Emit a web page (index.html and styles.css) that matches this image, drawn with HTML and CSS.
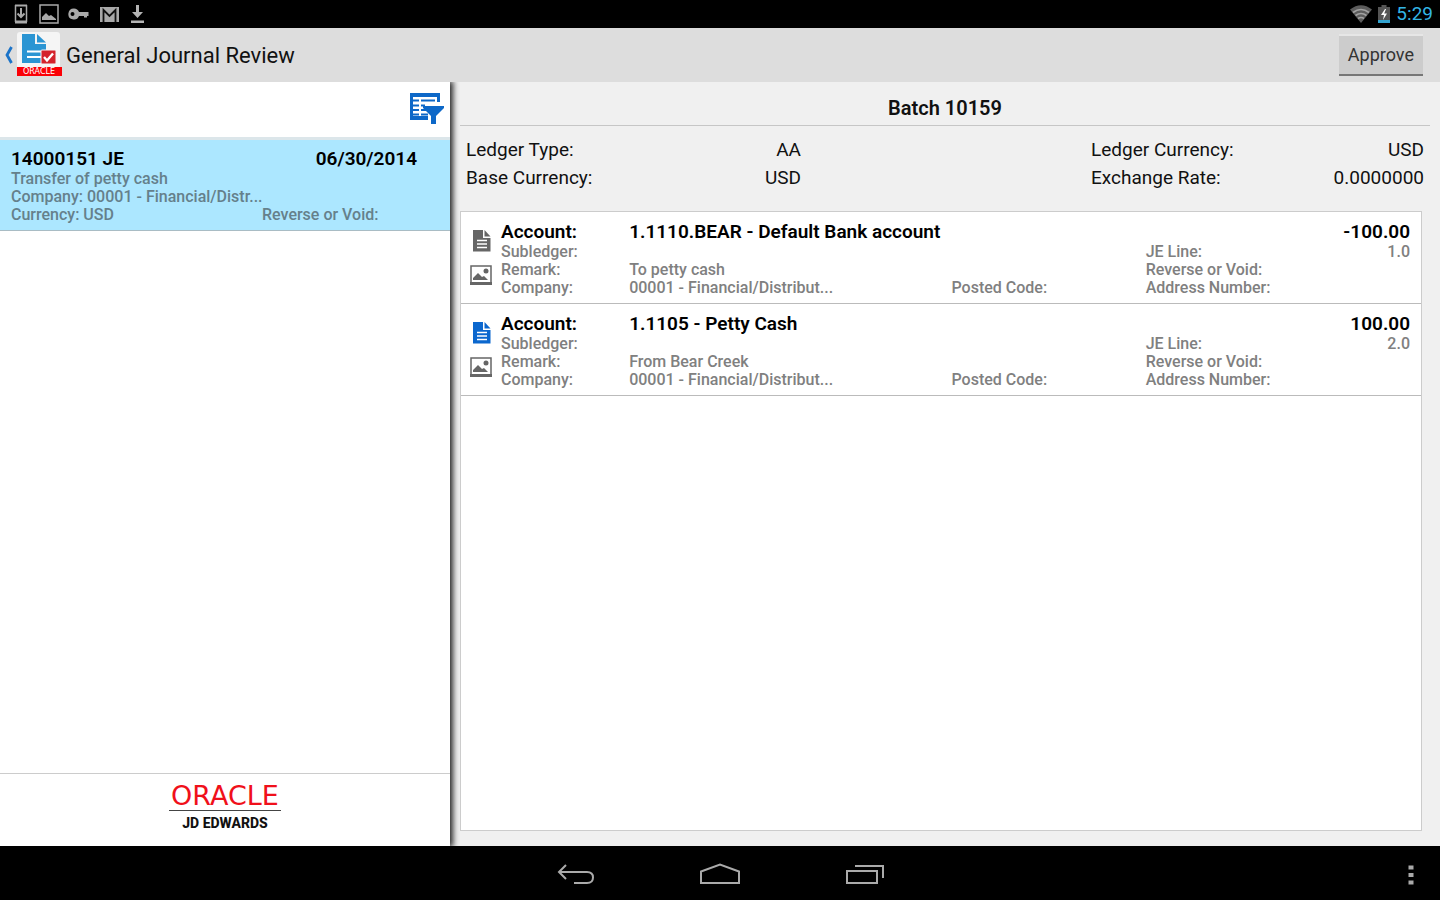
FILE: index.html
```html
<!DOCTYPE html>
<html lang="en">
<head>
<meta charset="utf-8">
<meta name="viewport" content="width=device-width, initial-scale=1">
<title>General Journal Review</title>
<link rel="stylesheet" href="styles.css">
</head>
<body>
<div class="statusbar">
  <div class="status-icons">
    <svg width="14" height="20" viewBox="0 0 14 20" fill="none" stroke="#a9a9a9"><path d="M1.5 1v17M12.500 1v17" stroke-width="1.500"/><path d="M1 1.500h12" stroke-width="2"/><path d="M1 18h12" stroke-width="3"/><path d="M7 4v9M3.500 9.500 7 13l3.500-3.500" stroke-width="2"/></svg>
    <svg width="20" height="20" viewBox="0 0 20 20"><path d="M1 1h18v18H1z" fill="none" stroke="#a9a9a9" stroke-width="1.500"/><path d="M3 16v-3l4-4 3 3 2-1 5 4v1z" fill="#a9a9a9"/></svg>
    <svg width="21" height="20" viewBox="0 0 21 20" fill="#a9a9a9"><path fill-rule="evenodd" d="M6 4.500a5.500 5.500 0 0 1 5 3.500h9.500v4H19v1.500h-3V12h-5A5.500 5.500 0 1 1 6 4.500zM4.500 8a2 2 0 1 0 0 4 2 2 0 0 0 0-4z"/></svg>
    <svg width="19" height="20" viewBox="0 0 19 20"><path d="M0 3h19v15H0z" fill="#a9a9a9"/><path d="M3.500 18V6l6 6 6-6v12" fill="none" stroke="#111" stroke-width="1.800"/></svg>
    <svg width="15" height="20" viewBox="0 0 15 20" fill="#b4b4b4"><path d="M6 1h3v7h4l-5.500 6L2 8h4zM1 16.500h13V19H1z"/></svg>
  </div>
  <div class="status-right">
    <svg width="22" height="18" viewBox="0 0 22 18"><path d="M0 4.500Q11-4 22 4.500L11 18z" fill="#5c5c5c"/><path d="M3 7.500q8-6 16 0M5.500 10.500q5.500-4 11 0M8 13.500q3-2 6 0" fill="none" stroke="#a2a2a2" stroke-width="1.600"/></svg>
    <svg width="12" height="18" viewBox="0 0 12 18"><path d="M3.500 0h5v2H12v16H0V2h3.500z" fill="#555"/><path d="M0 15h12v3H0z" fill="#33a3cf"/><path d="M7 4 3 10h3l-1 5 4-6.500H6.200L8 4z" fill="#fff"/></svg>
    <time>5:29</time>
  </div>
</div>
<header class="appbar">
  <button class="back" aria-label="Up"><svg width="9" height="18" viewBox="0 0 9 18"><path d="M7.500 1 3 9l4.500 8" fill="none" stroke="#1b73c8" stroke-width="2.800"/></svg></button>
  <svg class="applogo" width="46" height="46" viewBox="0 0 46 46" aria-label="Oracle">
    <rect x="1" y="0" width="43" height="40" rx="3" fill="#f5f5f5"/>
    <path d="M6 2h13v10h11v19H6z" fill="#2b95d3"/><path d="M21 2v8.500h9z" fill="#2b95d3"/>
    <path d="M11 19.500h14M11 25h14" stroke="#fff" stroke-width="2"/>
    <rect x="25" y="18" width="15" height="14" rx="1" fill="#d4232c" stroke="#f5f5f5"/>
    <path d="M28 25l3 3.500 6-7" fill="none" stroke="#fff" stroke-width="2.400"/>
    <path d="M1 35h45v9H1z" fill="#fb0006"/>
    <text class="applogo-text" x="23" y="42" text-anchor="middle">ORACLE</text>
  </svg>
  <h1>General Journal Review</h1>
  <button class="approve">Approve</button>
</header>
<main class="panes">
  <section class="master">
    <div class="toolbar">
      <button class="filter" aria-label="Filter"><svg width="36" height="34" viewBox="0 0 36 34" fill="#0d68c8">
        <path d="M1 1h30v9h-3V5H4v19h15v4H1z"/><path d="M4 7.500h6v2H4zM12 7.500h14v2H12zM4 12.500h6v2H4zM12 12.500h4v2h-4zM4 17h6v2H4zM12 17h6v2h-6zM4 21.500h6v2H4zM12 21.500h7v2h-7z"/><path d="M14 14h21v2l-8 8v8h-5v-8l-8-8z"/></svg></button>
    </div>
    <a class="entry" href="#entry">
      <span class="entry-head"><strong>14000151 JE</strong><strong>06/30/2014</strong></span>
      <span>Transfer of petty cash</span>
      <span>Company: 00001 - Financial/Distr...</span>
      <span class="entry-foot"><span>Currency: USD</span><span>Reverse or Void:</span></span>
    </a>
    <footer class="brand">
      <div class="brand-name">ORACLE</div>
      <div class="brand-product">JD EDWARDS</div>
    </footer>
  </section>
  <section class="detail">
    <h2>Batch 10159</h2>
    <dl class="summary">
      <div><dt>Ledger Type:</dt><dd>AA</dd></div>
      <div><dt>Ledger Currency:</dt><dd>USD</dd></div>
      <div><dt>Base Currency:</dt><dd>USD</dd></div>
      <div><dt>Exchange Rate:</dt><dd>0.0000000</dd></div>
    </dl>
    <div class="lines">
      <article class="line">
        <div class="line-icons">
          <button aria-label="Text attachment"><svg width="18" height="22" viewBox="0 0 18 22"><path d="M0 0h10v8h7.500v13.500H0z" fill="#666"/><path d="M11.500 0 17.500 6.500h-6z" fill="#666"/><path d="M4 10.500h10M4 14h10M4 17.500h10" stroke="#fff" stroke-width="1.500"/></svg></button>
          <button aria-label="Photo attachment"><svg width="22" height="20" viewBox="0 0 22 20"><path d="M1 1h20v17H1z" fill="#fff" stroke="#666" stroke-width="1.500"/><path d="M0 17h22v3H0zM3 15v-2l5-5 4 4 2-1 4 4z" fill="#666"/><circle cx="16" cy="6" r="2.500" fill="#666"/></svg></button>
        </div>
        <div class="fields">
          <strong>Account:</strong><strong class="account">1.1110.BEAR - Default Bank account</strong><strong class="amount">-100.00</strong>
          <span>Subledger:</span><span></span><span></span><span>JE Line:</span><span class="amount">1.0</span>
          <span>Remark:</span><span>To petty cash</span><span></span><span>Reverse or Void:</span><span></span>
          <span>Company:</span><span>00001 - Financial/Distribut...</span><span>Posted Code:</span><span>Address Number:</span><span></span>
        </div>
      </article>
      <article class="line">
        <div class="line-icons">
          <button aria-label="Text attachment"><svg width="18" height="22" viewBox="0 0 18 22"><path d="M0 0h10v8h7.500v13.500H0z" fill="#0b67ce"/><path d="M11.500 0 17.500 6.500h-6z" fill="#0b67ce"/><path d="M4 10.500h10M4 14h10M4 17.500h10" stroke="#fff" stroke-width="1.500"/></svg></button>
          <button aria-label="Photo attachment"><svg width="22" height="20" viewBox="0 0 22 20"><path d="M1 1h20v17H1z" fill="#fff" stroke="#666" stroke-width="1.500"/><path d="M0 17h22v3H0zM3 15v-2l5-5 4 4 2-1 4 4z" fill="#666"/><circle cx="16" cy="6" r="2.500" fill="#666"/></svg></button>
        </div>
        <div class="fields">
          <strong>Account:</strong><strong class="account">1.1105 - Petty Cash</strong><strong class="amount">100.00</strong>
          <span>Subledger:</span><span></span><span></span><span>JE Line:</span><span class="amount">2.0</span>
          <span>Remark:</span><span>From Bear Creek</span><span></span><span>Reverse or Void:</span><span></span>
          <span>Company:</span><span>00001 - Financial/Distribut...</span><span>Posted Code:</span><span>Address Number:</span><span></span>
        </div>
      </article>
    </div>
  </section>
</main>
<nav class="navbar">
  <span></span>
  <div class="nav-keys">
    <button aria-label="Back"><svg width="40" height="24" viewBox="0 0 40 24"><path d="M11 2 4 9l7 7M4 9h28q6 0 6 5.500T32 20H19" fill="none" stroke="#aaa" stroke-width="2"/></svg></button>
    <button aria-label="Home"><svg width="40" height="24" viewBox="0 0 40 24"><path d="M1 20V8.500L20 1.500l19 7V20z" fill="none" stroke="#aaa" stroke-width="2"/></svg></button>
    <button aria-label="Recent apps"><svg width="40" height="24" viewBox="0 0 40 24"><path d="M2 8h30v12H2zM10 3h28v12" fill="none" stroke="#aaa" stroke-width="2"/></svg></button>
  </div>
  <button class="overflow" aria-label="More options"><svg width="6" height="20" viewBox="0 0 6 20" fill="#aaa"><path d="M.5.500h5v4h-5zM.5 8h5v4h-5zM.5 15.500h5v4h-5z"/></svg></button>
</nav>
</body>
</html>
```
FILE: styles.css
```css
* { box-sizing: border-box; }

body {
  margin: 0;
  min-height: 100vh;
  display: flex;
  flex-direction: column;
  background: #000;
  color: #111;
  font-family: Roboto, "Liberation Sans", sans-serif;
}

button {
  display: flex;
  padding: 0;
  border: 0;
  background: none;
  font: inherit;
  color: inherit;
}

svg { display: block; flex: none; }
h1, h2, dl, dd { margin: 0; }
strong { font-weight: 600; }

/* System status bar */
.statusbar {
  height: 28px;
  display: flex;
  align-items: center;
  justify-content: space-between;
  padding: 0 7px 0 14px;
}
.status-icons { display: flex; align-items: center; gap: 11px; }
.status-icons svg:nth-child(3) { margin-left: -2px; }
.status-right { display: flex; align-items: center; gap: 6px; }
.status-right time { color: #33b5e5; font-size: 19px; line-height: 28px; }

/* Application bar */
.appbar {
  height: 54px;
  display: flex;
  align-items: center;
  padding: 0 17px 0 4px;
  background: #ddd;
}
.back { margin-right: 3px; }
.applogo { margin-right: 4px; }
.applogo-text { font-family: "DejaVu Sans", sans-serif; font-size: 8px; fill: #fff; }
.appbar h1 { flex: 1; font-size: 22px; line-height: 28px; font-weight: 400; padding-top: 1px; }
.approve {
  height: 42px;
  padding: 0 9px 2px;
  align-items: center;
  background: #ccc;
  border-top: 2px solid #e6e6e6;
  border-bottom: 2px solid #777;
  font-size: 18px;
  color: #333;
}

/* Two-pane layout */
.panes { flex: 1; display: flex; background: #f0f0f0; }
.master {
  flex: 0 0 31.25%;
  display: flex;
  flex-direction: column;
  background: #fff;
  box-shadow: 2px 0 6px 1px #222;
  clip-path: inset(0 -10px 0 0);
}
.toolbar {
  height: 58px;
  display: flex;
  justify-content: flex-end;
  padding: 10px 5px 0;
  border-bottom: 3px solid #dce6ea;
}
.entry {
  display: flex;
  flex-direction: column;
  padding: 7px 11px 6px;
  background: #ace7ff;
  border-bottom: 1px solid #a9bcc4;
  color: #65808b;
  text-decoration: none;
  font-size: 16px;
  line-height: 18px;
  font-weight: 500;
}
.entry-head {
  display: flex;
  justify-content: space-between;
  padding-right: 22px;
  color: #000;
  font-size: 19px;
  line-height: 23px;
}
.entry-foot { display: grid; grid-template-columns: 251px 1fr; }
.brand {
  margin-top: auto;
  height: 73px;
  display: flex;
  flex-direction: column;
  align-items: center;
  padding-top: 8px;
  border-top: 1px solid #ccc;
}
.brand-name {
  padding: 0 2px;
  border-bottom: 1px solid #444;
  color: #f0101a;
  font-family: "DejaVu Sans", sans-serif;
  font-size: 27px;
  line-height: 28px;
}
.brand-product { font-size: 14px; line-height: 24px; font-weight: 800; }

/* Batch detail */
.detail {
  flex: 1;
  min-width: 0;
  display: flex;
  flex-direction: column;
  padding: 0 10px 15px;
}
.detail h2 {
  height: 44px;
  border-bottom: 1px solid #c6c6c6;
  font-size: 20px;
  line-height: 52px;
  font-weight: 600;
  text-align: center;
}
.summary {
  display: grid;
  grid-template-columns: 335fr 290fr 333fr;
  padding: 10px 6px 19px;
  font-size: 19px;
  line-height: 28px;
}
.summary div { display: flex; justify-content: space-between; }
.summary div:nth-child(even) { grid-column: 3; }
.lines { flex: 1; margin-right: 8px; background: #fff; border: 1px solid #ccc; }
.line {
  display: flex;
  padding: 8px 11px 6px 9px;
  border-bottom: 1px solid #bbb;
}
.line-icons {
  flex: 0 0 31px;
  display: flex;
  flex-direction: column;
  gap: 13px;
  padding-top: 10px;
}
.line-icons button:first-child { padding-left: 3px; }
.fields {
  flex: 1;
  display: grid;
  grid-template-columns: 128fr 322fr 194fr 164fr 100fr;
  grid-template-rows: 23px repeat(3, 18px);
  color: #808080;
  font-size: 16px;
  line-height: 18px;
  font-weight: 500;
  white-space: nowrap;
}
.fields strong { color: #000; font-size: 19px; line-height: 23px; }
.account { grid-column: 2 / 5; }
.amount { text-align: right; }

/* System navigation bar */
.navbar {
  height: 54px;
  display: grid;
  grid-template-columns: 1fr auto 1fr;
  align-items: center;
  padding: 3px 26px 0;
}
.nav-keys { display: flex; gap: 105px; }
.overflow { justify-self: end; }
```
